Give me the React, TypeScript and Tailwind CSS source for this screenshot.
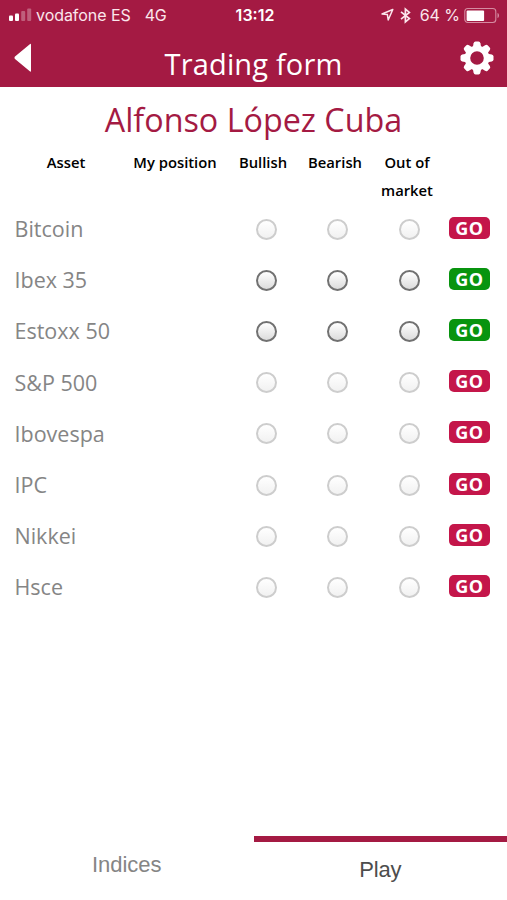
interface Asset {
  name: string
  open: boolean
}

const assets: Asset[] = [
  { name: 'Bitcoin', open: false },
  { name: 'Ibex 35', open: true },
  { name: 'Estoxx 50', open: true },
  { name: 'S&P 500', open: false },
  { name: 'Ibovespa', open: false },
  { name: 'IPC', open: false },
  { name: 'Nikkei', open: false },
  { name: 'Hsce', open: false },
]

const positions = ['Bullish', 'Bearish', 'Out of market']

function StatusBar() {
  return (
    <div className="grid h-[30px] grid-cols-[1fr_auto_1fr] items-center pl-[9px] pr-[7px] font-['Inter',sans-serif] text-[16px] leading-[30px] text-[#fbe6ec]">
      <div className="flex items-center">
        <svg width="24" height="14" viewBox="0 0 24 14" fill="#fff">
          <rect x="0" y="7.5" width="4" height="5.5" rx="1" />
          <rect x="6" y="5.5" width="4" height="7.5" rx="1" />
          <rect x="12.2" y="3" width="4" height="10" rx="1" opacity=".3" />
          <rect x="18.2" y="0.5" width="4" height="12.5" rx="1" opacity=".3" />
        </svg>
        <span className="ml-[3px] tracking-[-0.05px]">vodafone ES</span>
        <span className="ml-[14px] tracking-[-0.2px]">4G</span>
      </div>
      <span className="pl-px font-semibold text-white">13:12</span>
      <div className="flex items-center justify-end">
        <svg width="14" height="14" viewBox="0 0 14 14" fill="none" stroke="#fbe6ec" strokeWidth="1.5" strokeLinejoin="round">
          <path d="M12.800 1.500 2 6l5.400.6.800 5.400z" />
        </svg>
        <svg className="ml-[6px]" width="11" height="17" viewBox="0 0 11 17" fill="none" stroke="#fbe6ec" strokeWidth="1.7">
          <path d="M1 4.800 9.400 11.600 5.400 15V2L9.400 5.400 1 12.200" />
        </svg>
        <span className="ml-[9px] whitespace-nowrap tracking-[-0.05px]">64 %</span>
        <svg className="ml-[4px]" width="36" height="17" viewBox="0 0 36 17">
          <rect x="0.8" y="1.5" width="31" height="14" rx="3" fill="none" stroke="#d58ba1" strokeWidth="1.1" />
          <rect x="2.6" y="3.5" width="17.5" height="10.5" rx="1" fill="#fff" />
          <path d="M33.5 6v5c2-.6 2-4.4 0-5z" fill="#d58ba1" />
        </svg>
      </div>
    </div>
  )
}

function GearIcon() {
  return (
    <svg width="34" height="34" viewBox="-17 -17 34 34" fill="#fff">
      <circle r="9.6" fill="none" stroke="#fff" strokeWidth="5.6" />
      {[0, 45, 90, 135, 180, 225, 270, 315].map((angle) => (
        <path key={angle} d="M-4.2-10.500-3.400-14.800Q-3-16.500-1.500-16.500H1.500Q3-16.500 3.400-14.800L4.200-10.500z" transform={`rotate(${angle})`} />
      ))}
    </svg>
  )
}

function Header() {
  return (
    <header className="h-[87px] bg-[#a41a43]">
      <StatusBar />
      <div className="grid h-[57px] grid-cols-[60px_1fr_60px] text-white">
        <button className="flex justify-start pl-[14px] pt-[13px]">
          <svg width="18" height="30" viewBox="0 0 18 30" fill="#fff">
            <path d="M15.5 1.4Q17-.2 17 2V27.500Q17 29.600 15.500 28L1 16Q0 14.700 1 13.500z" />
          </svg>
        </button>
        <h1 className="pt-[14px] text-center text-[29px] leading-[40px] tracking-[0.15px]">Trading form</h1>
        <button className="flex justify-end pr-[13px] pt-[11px]">
          <GearIcon />
        </button>
      </div>
    </header>
  )
}

function Radio({ enabled }: { enabled: boolean }) {
  return (
    <span
      className={
        enabled
          ? 'size-[21px] rounded-full border-2 border-[#717171] bg-linear-to-b from-white to-[#dcdcdc]'
          : 'size-[21px] rounded-full border-2 border-[#cdcdcd] bg-linear-to-b from-white to-[#f1f1f1]'
      }
    />
  )
}

function AssetRow({ name, open }: Asset) {
  return (
    <div className="grid h-[51.2px] grid-cols-[230px_72px_71px_72px_1fr] items-center">
      <span className="pl-[14.5px] text-[21.5px] text-[#858585]">{name}</span>
      {positions.map((position) => (
        <span key={position} className="flex justify-center">
          <Radio enabled={open} />
        </span>
      ))}
      <button
        className={`ml-[4px] mb-[3px] h-[22px] w-[41px] rounded-[5px] text-center text-[18px] leading-[22px] font-bold tracking-[0.5px] text-white ${
          open ? 'bg-[#08940f]' : 'bg-[#c4164a]'
        }`}
      >
        GO
      </button>
    </div>
  )
}

export default function App() {
  return (
    <div className="flex h-[900px] w-[507px] flex-col overflow-hidden bg-white font-['Open_Sans',sans-serif]">
      <Header />
      <main className="flex-1">
        <h2 className="pt-[8px] text-center text-[32.3px] leading-[48px] text-[#a41a43]">Alfonso López Cuba</h2>
        <div className="grid h-[60.5px] grid-cols-[132px_86px_90px_54px_90px_1fr] pt-[5px] text-center text-[14.8px] leading-[28px] font-semibold text-black">
          <span>Asset</span>
          <span className="whitespace-nowrap">My position</span>
          <span>Bullish</span>
          <span>Bearish</span>
          <span className="px-[15px]">Out of market</span>
        </div>
        {assets.map((asset) => (
          <AssetRow key={asset.name} {...asset} />
        ))}
      </main>
      <nav className="grid h-[64px] grid-cols-2 text-center font-['Liberation_Sans',sans-serif] text-[22px]">
        <button className="pt-[13px] pb-[19px] leading-[32px] text-[#858585]">Indices</button>
        <button className="border-t-[6px] border-[#a41a43] pt-[12px] pb-[14px] leading-[32px] tracking-[-0.2px] text-[#4d4d4d]">Play</button>
      </nav>
    </div>
  )
}
